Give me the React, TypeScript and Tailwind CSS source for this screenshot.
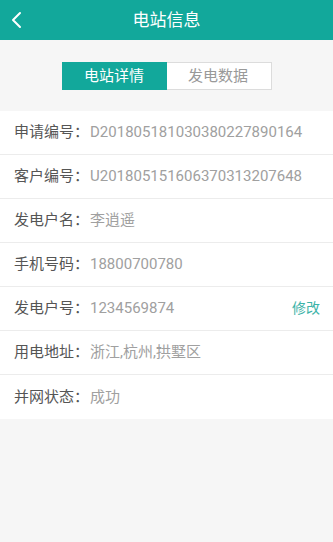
const rows: { label: string; value: string; action?: string }[] = [
  { label: "申请编号：", value: "D201805181030380227890164" },
  { label: "客户编号：", value: "U201805151606370313207648" },
  { label: "发电户名：", value: "李逍遥" },
  { label: "手机号码：", value: "18800700780" },
  { label: "发电户号：", value: "1234569874", action: "修改" },
  { label: "用电地址：", value: "浙江,杭州,拱墅区" },
  { label: "并网状态：", value: "成功" },
];

const App = () => {
  return (
    <div
      className="w-[333px] h-[542px] bg-[#f6f6f6] flex flex-col"
      style={{ fontFamily: 'Roboto, "Noto Sans CJK SC", sans-serif' }}
    >
      <div className="h-10 bg-[#12a89b] flex items-center relative">
        <svg
          className="absolute left-[9px] top-[11px]"
          width="16"
          height="18"
          viewBox="0 0 16 18"
          fill="none"
        >
          <path d="M11 2 L4 9 L11 16" stroke="white" strokeWidth="2" strokeLinecap="round" strokeLinejoin="round" />
        </svg>
        <p className="w-full text-center text-white text-[17px] leading-none">电站信息</p>
      </div>

      <div className="flex justify-center pt-[22px] pb-[21px]">
        <div className="flex w-[210px] h-7 border border-[#dcdcdc] bg-white">
          <div className="flex-1 bg-[#12a89b] text-white text-[15px] flex items-center justify-center -m-px">
            电站详情
          </div>
          <div className="flex-1 text-[#999999] text-[15px] flex items-center justify-center">
            发电数据
          </div>
        </div>
      </div>

      <div className="bg-white flex flex-col">
        {rows.map((row, i) => (
          <div
            key={row.label}
            className={`h-11 flex items-center pl-[14px] pr-[13px] ${
              i < rows.length - 1 ? "border-b border-[#ececec]" : ""
            }`}
          >
            <span className="text-[#555555] text-[15px] w-[76px] shrink-0">{row.label}</span>
            <span className="text-[#a0a0a0] text-[15px] flex-1">{row.value}</span>
            {row.action && <span className="text-[#3bb3a8] text-[14px]">{row.action}</span>}
          </div>
        ))}
      </div>
    </div>
  );
};

export default App;
